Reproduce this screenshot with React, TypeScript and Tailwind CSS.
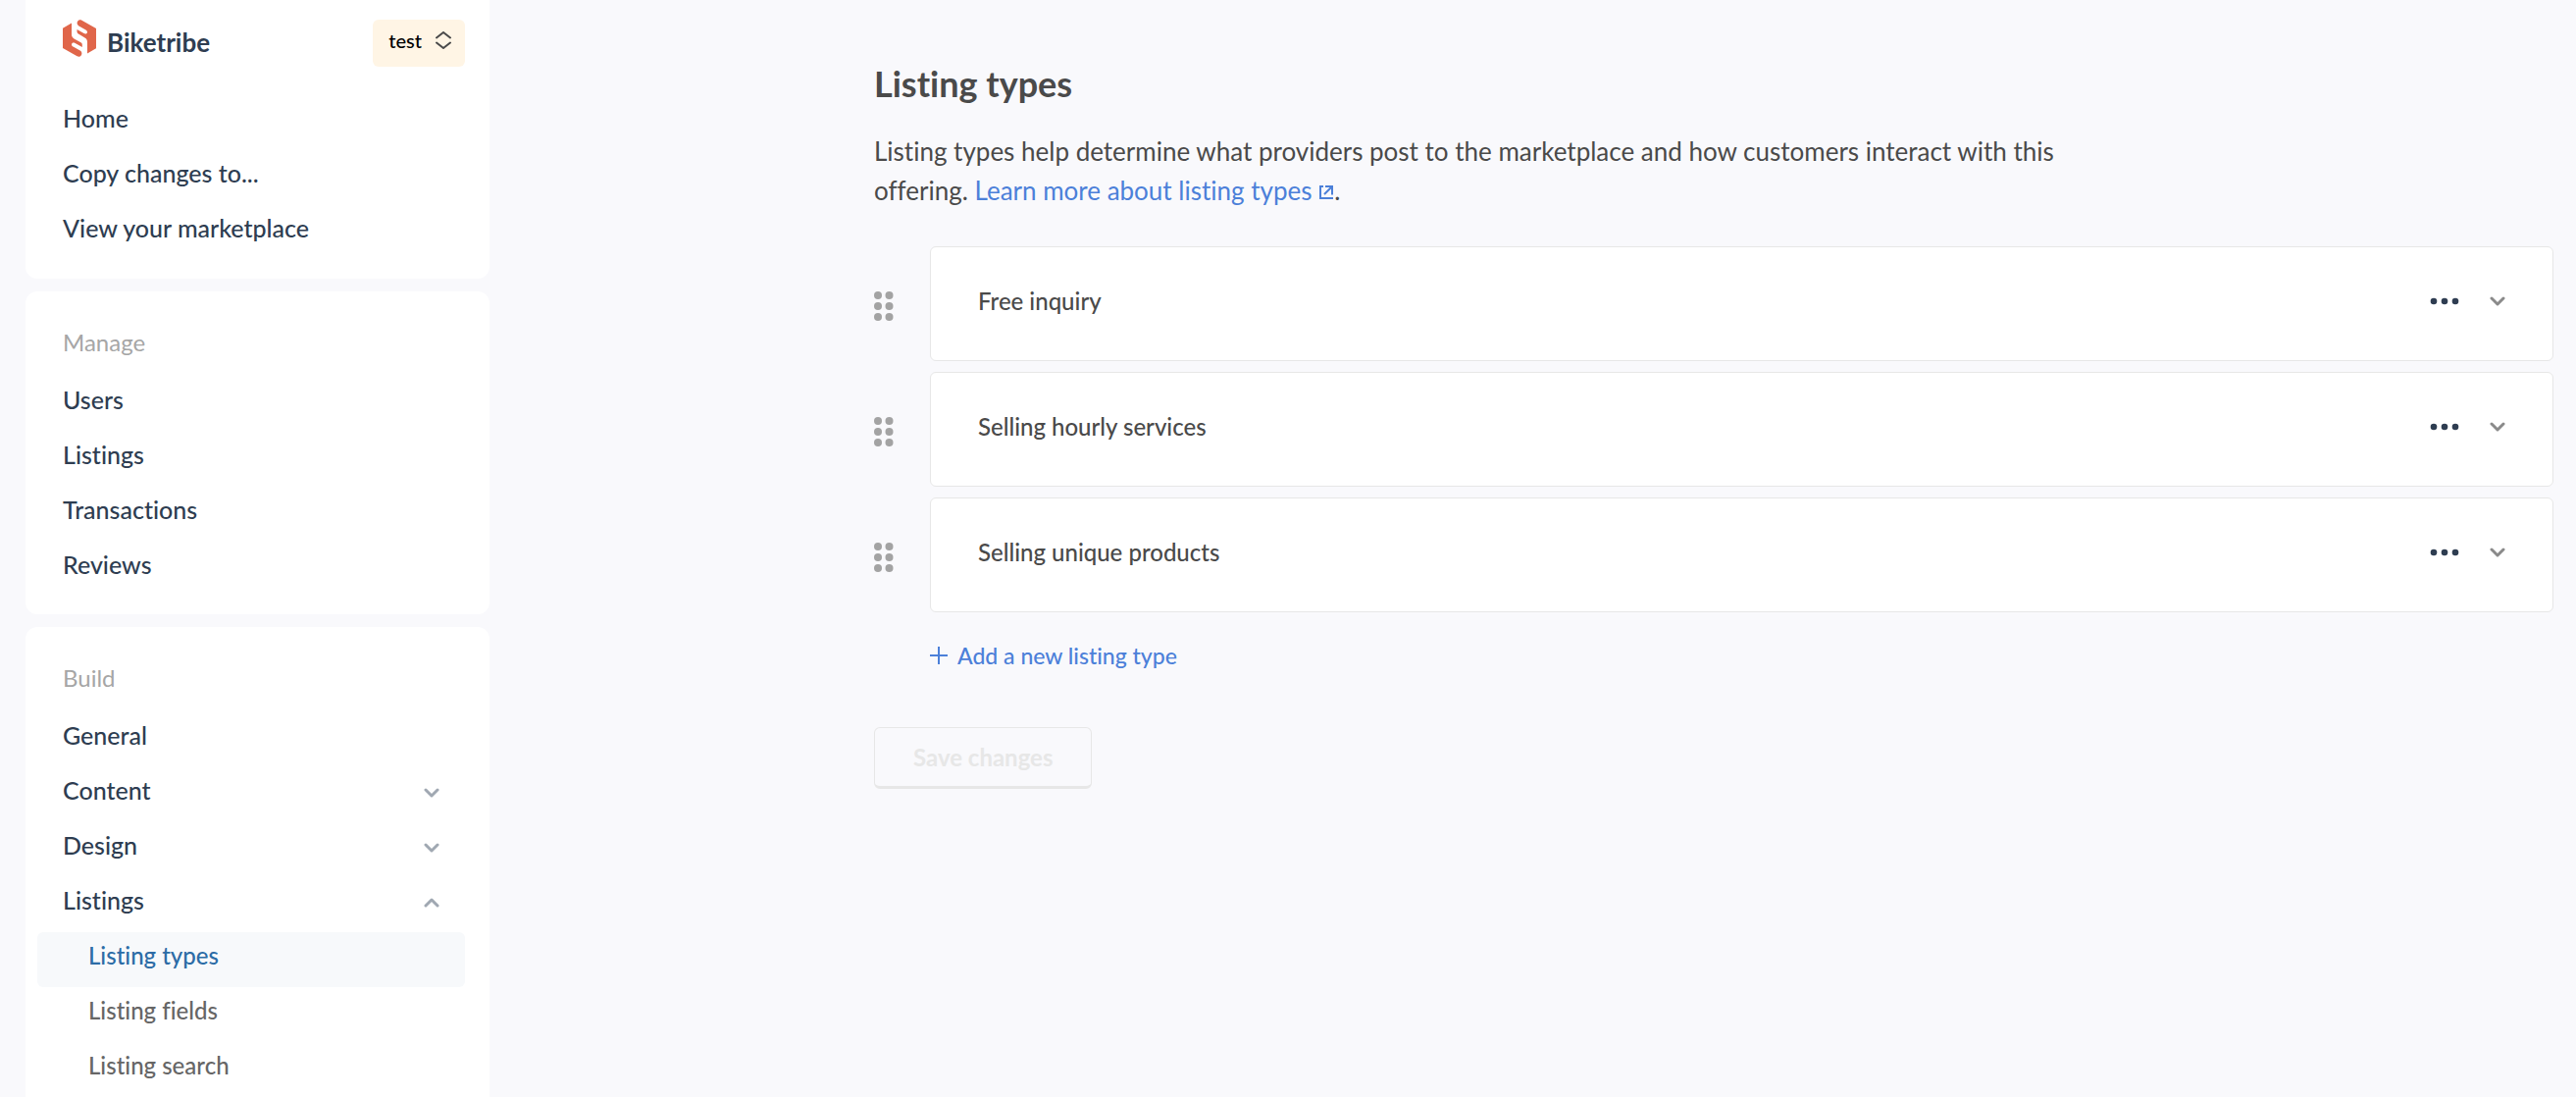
import type { ReactNode } from "react";

function Chevron({ up = false, className = "" }: { up?: boolean; className?: string }) {
  return (
    <svg
      viewBox="0 0 16 10"
      className={`h-2.5 w-4 shrink-0 fill-none stroke-current ${className}`}
      strokeWidth="3"
      strokeLinecap="round"
      strokeLinejoin="round"
      aria-hidden="true"
    >
      <path d={up ? "M2 8 L8 2 L14 8" : "M2 2 L8 8 L14 2"} />
    </svg>
  );
}

function Logo() {
  return (
    <svg viewBox="0 0 34 38" className="h-[38px] w-[34px]" aria-hidden="true">
      <path
        fill="#e0664a"
        d="M0 8.8 L9 3.6 V15 C9 17 9.8 18.400 11.500 19.400 L18.800 23.600 C19.600 24.100 19.800 24.800 19.800 26 V28 L12.600 23.900 C11 23 9.600 23.500 9.200 24.600 C8.800 25.800 9.300 26.800 10.500 27.500 L17.600 31.600 C19.400 32.700 19.800 34.300 19 36 C18.200 37.700 16.400 38.300 14.600 37.300 L0 29.100 Z"
      />
      <path
        fill="#e0664a"
        d="M34 29.200 L25 34.400 V23 C25 21 24.200 19.600 22.500 18.600 L15.900 14.400 C14.900 13.800 14.500 13 14.500 12 V10 L21.600 14.100 C23 14.900 24.300 14.500 24.800 13.400 C25.200 12.200 24.700 11.200 23.500 10.500 L16.400 6.400 C14.600 5.300 14.200 3.700 15 2 C15.800 0.300 17.600 -0.300 19.400 0.700 L34 8.900 Z"
      />
    </svg>
  );
}

function NavItem({ label, chevron }: { label: string; chevron?: "up" | "down" }) {
  const row =
    "flex h-14 w-full items-center justify-between pb-2 pl-[26px] pr-[26px] text-left text-[25px] font-medium text-[#2e3d51]";
  return (
    <li>
      {chevron ? (
        <button type="button" aria-expanded={chevron === "up"} className={row}>
          {label}
          <Chevron up={chevron === "up"} className="mt-1 text-[#a0a8b2]" />
        </button>
      ) : (
        <a href="#" className={row}>
          {label}
        </a>
      )}
    </li>
  );
}

function SubItem({ label, active = false }: { label: string; active?: boolean }) {
  return (
    <li>
      <a
        href="#"
        aria-current={active ? "page" : undefined}
        className={`flex h-14 items-center rounded-md pb-2 pl-[52px] text-2xl font-medium ${
          active ? "bg-[#f7f9fb] text-[#2c6ca6]" : "text-[#666666]"
        }`}
      >
        {label}
      </a>
    </li>
  );
}

function NavSection({ title, className, children }: { title: string; className: string; children: ReactNode }) {
  return (
    <section className={`bg-white pl-3 pr-[25px] ${className}`}>
      <h2 className="h-[87px] pl-[26px] pt-9 text-2xl leading-8 text-[#a6a6a6]">{title}</h2>
      <ul>{children}</ul>
    </section>
  );
}

function Sidebar() {
  return (
    <nav className="ml-[26px] flex w-[473px] shrink-0 flex-col gap-[13px]">
      <section className="rounded-b-xl bg-white pb-[19px] pl-3 pr-[25px]">
        <div className="flex h-[97px] items-start justify-between pl-[26px] pt-5">
          <a href="#" className="flex items-start gap-[11px] text-[26px] font-bold leading-[46px] text-[#2e3d51]">
            <Logo />
            Biketribe
          </a>
          <button
            type="button"
            className="flex h-12 items-center gap-3.5 rounded-md bg-[#fff5e5] pb-1.5 pl-4 pr-3.5 text-xl font-medium text-black"
          >
            test
            <svg
              viewBox="0 0 16 18"
              className="h-[18px] w-4 fill-none stroke-[#4a4a4a]"
              strokeWidth="2"
              strokeLinecap="round"
              strokeLinejoin="round"
              aria-hidden="true"
            >
              <path d="M1 6.500 L8 1 L15 6.500 M1 11.500 L8 17 L15 11.500" />
            </svg>
          </button>
        </div>
        <ul>
          <NavItem label="Home" />
          <NavItem label="Copy changes to..." />
          <NavItem label="View your marketplace" />
        </ul>
      </section>
      <NavSection title="Manage" className="rounded-xl pb-[18px]">
        <NavItem label="Users" />
        <NavItem label="Listings" />
        <NavItem label="Transactions" />
        <NavItem label="Reviews" />
      </NavSection>
      <NavSection title="Build" className="grow rounded-t-xl">
        <NavItem label="General" />
        <NavItem label="Content" chevron="down" />
        <NavItem label="Design" chevron="down" />
        <NavItem label="Listings" chevron="up" />
        <SubItem label="Listing types" active />
        <SubItem label="Listing fields" />
        <SubItem label="Listing search" />
      </NavSection>
    </nav>
  );
}

function ListingRow({ label }: { label: string }) {
  return (
    <li className="flex items-center">
      <button type="button" aria-label={`Reorder ${label}`} className="w-[57px] shrink-0 pt-1">
        <svg viewBox="0 0 20 30" className="h-[30px] w-5 fill-[#a3a3a3]" aria-hidden="true">
          <circle cx="4" cy="4" r="4" />
          <circle cx="15.500" cy="4" r="4" />
          <circle cx="4" cy="15" r="4" />
          <circle cx="15.500" cy="15" r="4" />
          <circle cx="4" cy="26" r="4" />
          <circle cx="15.500" cy="26" r="4" />
        </svg>
      </button>
      <div className="flex h-[117px] grow items-center rounded-md border border-[#e7e7e7] bg-white pb-1.5 pl-12 pr-12">
        <span className="grow text-2xl font-medium text-[#4a4a4a]">{label}</span>
        <button type="button" aria-label={`More actions for ${label}`} className="mr-[31px]">
          <svg viewBox="0 0 30 8" className="h-2 w-[30px] fill-[#2e3d51]" aria-hidden="true">
            <circle cx="4" cy="4" r="3.300" />
            <circle cx="15" cy="4" r="3.300" />
            <circle cx="26" cy="4" r="3.300" />
          </svg>
        </button>
        <button type="button" aria-label={`Expand ${label}`}>
          <Chevron className="text-[#8a8a8a]" />
        </button>
      </div>
    </li>
  );
}

export default function App() {
  return (
    <div className="flex min-h-screen bg-[#f9f9fc] font-['Lato','Open_Sans',sans-serif] [font-variant-ligatures:none]">
      <Sidebar />
      <main className="min-w-0 grow pl-[392px] pr-[23px] pt-[60px] text-[#4a4a4a]">
        <h1 className="text-4xl font-bold leading-[50px]">Listing types</h1>
        <p className="mt-6 max-w-[1250px] text-[26px] leading-10">
          Listing types help determine what providers post to the marketplace and how customers interact with this
          offering.{" "}
          <a href="#" className="text-[#4c80d9]">
            Learn more about listing types{" "}
            <svg
              viewBox="0 0 16 16"
              className="inline size-4 fill-none stroke-current align-baseline"
              strokeWidth="2"
              aria-hidden="true"
            >
              <path d="M5 2 H2 V14 H15 M7 2 H14 V10.500 M14 2 L6 10" />
            </svg>
          </a>
          .
        </p>
        <ul className="mt-[37px] flex flex-col gap-[11px]">
          <ListingRow label="Free inquiry" />
          <ListingRow label="Selling hourly services" />
          <ListingRow label="Selling unique products" />
        </ul>
        <button
          type="button"
          className="ml-[57px] mt-7 flex items-center gap-2.5 text-[23px] font-medium leading-8 text-[#4c80d9]"
        >
          <svg viewBox="0 0 18 18" className="size-[18px] fill-none stroke-current" strokeWidth="2" aria-hidden="true">
            <path d="M0 9 H18 M9 0 V18" />
          </svg>
          Add a new listing type
        </button>
        <button
          type="button"
          disabled
          className="mt-[57px] h-[63px] rounded-md border border-b-[3px] border-[#e7e7e7] px-[39px] text-2xl font-bold text-[#e7e7e7]"
        >
          Save changes
        </button>
      </main>
    </div>
  );
}
